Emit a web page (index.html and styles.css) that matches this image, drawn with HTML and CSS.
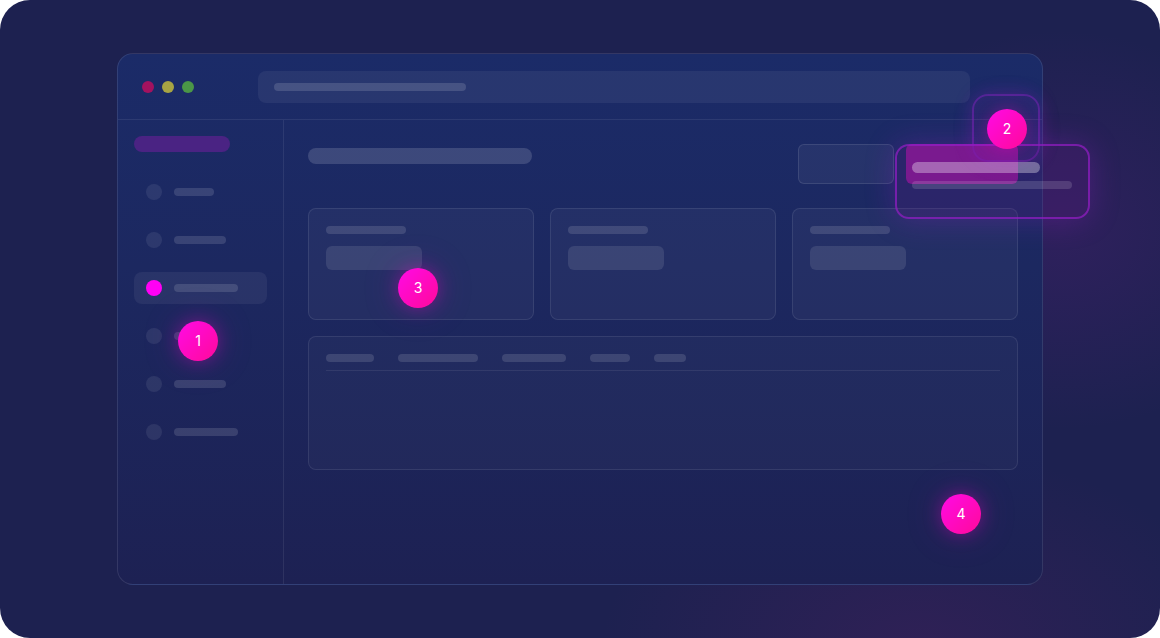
FILE: index.html
```html
<!DOCTYPE html>
<html lang="en">
<head>
<meta charset="utf-8">
<title>Onboarding tour preview</title>
<link rel="stylesheet" href="styles.css">
</head>
<body>
<div class="stage">
  <div class="window">
    <div class="titlebar">
      <div class="dots">
        <span class="dot dot-red"></span>
        <span class="dot dot-yellow"></span>
        <span class="dot dot-green"></span>
      </div>
      <div class="address"><span class="address-line"></span></div>
    </div>
    <div class="body">
      <aside class="sidebar">
        <div class="logo"></div>
        <ul class="nav">
          <li class="nav-item"><span class="nav-icon"></span><span class="nav-label w40"></span></li>
          <li class="nav-item"><span class="nav-icon"></span><span class="nav-label w52"></span></li>
          <li class="nav-item active"><span class="nav-icon"></span><span class="nav-label w64"></span></li>
          <li class="nav-item"><span class="nav-icon"></span><span class="nav-label w40"></span></li>
          <li class="nav-item"><span class="nav-icon"></span><span class="nav-label w52"></span></li>
          <li class="nav-item"><span class="nav-icon"></span><span class="nav-label w64"></span></li>
        </ul>
      </aside>
      <main class="main">
        <div class="header">
          <div class="page-title"></div>
          <div class="actions">
            <div class="btn"></div>
            <div class="btn btn-primary"></div>
          </div>
        </div>
        <div class="cards">
          <div class="card"><div class="card-title"></div><div class="card-value"></div></div>
          <div class="card"><div class="card-title"></div><div class="card-value"></div></div>
          <div class="card"><div class="card-title"></div><div class="card-value"></div></div>
        </div>
        <div class="table">
          <div class="thead">
            <span class="th w48"></span>
            <span class="th w80"></span>
            <span class="th w64"></span>
            <span class="th w40"></span>
            <span class="th w32"></span>
          </div>
          <div class="rule"></div>
        </div>
      </main>
    </div>
  </div>

  <div class="ring"></div>
  <div class="tooltip">
    <div class="tip-line1"></div>
    <div class="tip-line2"></div>
  </div>

  <div class="marker m1">1</div>
  <div class="marker m2">2</div>
  <div class="marker m3">3</div>
  <div class="marker m4">4</div>
</div>
</body>
</html>
```

FILE: styles.css
```css
* { box-sizing: border-box; margin: 0; padding: 0; }

html, body {
  background: #ffffff;
  font-family: Inter, "Noto Sans", "DejaVu Sans", sans-serif;
}

.stage {
  position: relative;
  width: 1160px;
  height: 638px;
  border-radius: 30px;
  overflow: hidden;
  padding: 53px 0 0 117px;
  background:
    radial-gradient(ellipse 320px 200px at 920px 650px, rgba(120, 30, 110, 0.2), rgba(120, 30, 110, 0) 100%),
    radial-gradient(ellipse 240px 200px at 1060px 230px, rgba(110, 30, 140, 0.22), rgba(110, 30, 140, 0) 100%),
    #1d2150;
}

.window {
  width: 926px;
  height: 532px;
  border: 1px solid rgba(255, 255, 255, 0.1);
  border-radius: 16px;
  background: linear-gradient(180deg, #1b2b68 0%, #1c2860 40%, #1d2153 100%);
  display: flex;
  flex-direction: column;
  overflow: hidden;
}

.titlebar {
  height: 66px;
  flex: none;
  display: flex;
  align-items: center;
  padding: 0 72px 0 24px;
  border-bottom: 1px solid rgba(255, 255, 255, 0.08);
}

.dots { display: flex; gap: 8px; }
.dot { width: 12px; height: 12px; border-radius: 50%; display: block; }
.dot-red { background: #a3125f; }
.dot-yellow { background: #a7a443; }
.dot-green { background: #4b9647; }

.address {
  margin-left: 64px;
  flex: 1;
  height: 32px;
  border-radius: 8px;
  background: rgba(255, 255, 255, 0.06);
  padding: 12px 16px;
}
.address-line {
  display: block;
  width: 192px;
  height: 8px;
  border-radius: 4px;
  background: rgba(255, 255, 255, 0.14);
}

.body { flex: 1; display: flex; }

.sidebar {
  width: 166px;
  flex: none;
  border-right: 1px solid rgba(255, 255, 255, 0.08);
  padding: 16px;
}
.logo {
  width: 96px;
  height: 16px;
  border-radius: 8px;
  background: #4a2383;
}
.nav {
  list-style: none;
  margin-top: 24px;
  display: flex;
  flex-direction: column;
  gap: 16px;
}
.nav-item {
  height: 32px;
  border-radius: 8px;
  padding: 0 12px;
  display: flex;
  align-items: center;
  gap: 12px;
}
.nav-item.active { background: rgba(255, 255, 255, 0.06); }
.nav-icon {
  width: 16px;
  height: 16px;
  border-radius: 50%;
  background: rgba(255, 255, 255, 0.08);
}
.nav-item.active .nav-icon { background: #ff00f5; }
.nav-label {
  height: 8px;
  border-radius: 4px;
  background: rgba(255, 255, 255, 0.13);
}
.w32 { width: 32px; }
.w40 { width: 40px; }
.w48 { width: 48px; }
.w52 { width: 52px; }
.w64 { width: 64px; }
.w80 { width: 80px; }

.main {
  flex: 1;
  padding: 24px 24px 0 24px;
  display: flex;
  flex-direction: column;
}

.header {
  display: flex;
  justify-content: space-between;
  align-items: flex-start;
  height: 40px;
}
.page-title {
  margin-top: 4px;
  width: 224px;
  height: 16px;
  border-radius: 8px;
  background: rgba(255, 255, 255, 0.15);
}
.actions { display: flex; gap: 12px; }
.btn {
  width: 96px;
  height: 40px;
  border-radius: 6px;
  border: 1px solid rgba(255, 255, 255, 0.1);
  background: rgba(255, 255, 255, 0.05);
}
.btn-primary {
  width: 112px;
  border: none;
  background: rgba(190, 20, 175, 0.62);
}

.cards {
  margin-top: 24px;
  display: grid;
  grid-template-columns: repeat(3, 1fr);
  gap: 16px;
}
.card {
  height: 112px;
  border-radius: 8px;
  border: 1px solid rgba(255, 255, 255, 0.09);
  background: rgba(255, 255, 255, 0.035);
  padding: 17px;
}
.card-title {
  width: 80px;
  height: 8px;
  border-radius: 4px;
  background: rgba(255, 255, 255, 0.13);
}
.card-value {
  margin-top: 12px;
  width: 96px;
  height: 24px;
  border-radius: 6px;
  background: rgba(255, 255, 255, 0.1);
}

.table {
  margin-top: 16px;
  height: 134px;
  border-radius: 8px;
  border: 1px solid rgba(255, 255, 255, 0.09);
  background: rgba(255, 255, 255, 0.025);
  padding: 17px;
}
.thead { display: flex; gap: 24px; }
.th {
  height: 8px;
  border-radius: 4px;
  background: rgba(255, 255, 255, 0.13);
}
.rule {
  margin-top: 8px;
  height: 1px;
  background: rgba(255, 255, 255, 0.08);
}

/* overlays */
.ring {
  position: absolute;
  left: 972px;
  top: 94px;
  width: 68px;
  height: 68px;
  border-radius: 16px;
  border: 2px solid rgba(130, 35, 190, 0.55);
  box-shadow: 0 0 18px rgba(150, 30, 200, 0.3), inset 0 0 16px rgba(150, 30, 200, 0.2);
}

.tooltip {
  position: absolute;
  left: 895px;
  top: 144px;
  width: 195px;
  height: 75px;
  border-radius: 14px;
  border: 2px solid rgba(150, 30, 200, 0.7);
  background: rgba(100, 25, 130, 0.22);
  box-shadow: 0 0 30px rgba(150, 30, 200, 0.3);
  padding: 16px 0 0 15px;
}
.tip-line1 {
  width: 128px;
  height: 11px;
  border-radius: 6px;
  background: rgba(255, 255, 255, 0.33);
}
.tip-line2 {
  margin-top: 8px;
  width: 160px;
  height: 8px;
  border-radius: 4px;
  background: rgba(255, 255, 255, 0.14);
}

.marker {
  position: absolute;
  width: 40px;
  height: 40px;
  border-radius: 50%;
  background: linear-gradient(135deg, #ff0ae6 0%, #ff0a9a 100%);
  box-shadow: 0 0 18px rgba(255, 0, 200, 0.35), 0 0 40px rgba(190, 0, 200, 0.2);
  color: #ffffff;
  font-size: 14px;
  line-height: 40px;
  text-align: center;
  font-weight: 400;
}
.m1 { left: 178px; top: 321px; }
.m2 { left: 987px; top: 109px; }
.m3 { left: 398px; top: 268px; }
.m4 { left: 941px; top: 494px; }
```
